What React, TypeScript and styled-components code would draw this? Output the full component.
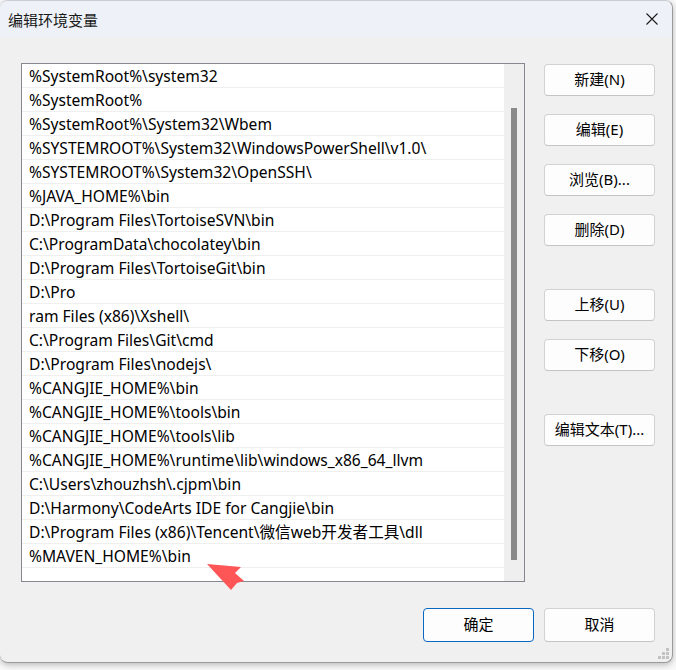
import React from "react";
import styled, { createGlobalStyle } from "styled-components";

const GlobalStyle = createGlobalStyle`
  html, body {
    margin: 0;
    padding: 0;
    background: #e4e4e4;
  }
  body {
    font-family: "Noto Sans", "Noto Sans CJK SC", sans-serif;
  }
`;

const paths = [
  "%SystemRoot%\\system32",
  "%SystemRoot%",
  "%SystemRoot%\\System32\\Wbem",
  "%SYSTEMROOT%\\System32\\WindowsPowerShell\\v1.0\\",
  "%SYSTEMROOT%\\System32\\OpenSSH\\",
  "%JAVA_HOME%\\bin",
  "D:\\Program Files\\TortoiseSVN\\bin",
  "C:\\ProgramData\\chocolatey\\bin",
  "D:\\Program Files\\TortoiseGit\\bin",
  "D:\\Pro",
  "ram Files (x86)\\Xshell\\",
  "C:\\Program Files\\Git\\cmd",
  "D:\\Program Files\\nodejs\\",
  "%CANGJIE_HOME%\\bin",
  "%CANGJIE_HOME%\\tools\\bin",
  "%CANGJIE_HOME%\\tools\\lib",
  "%CANGJIE_HOME%\\runtime\\lib\\windows_x86_64_llvm",
  "C:\\Users\\zhouzhsh\\.cjpm\\bin",
  "D:\\Harmony\\CodeArts IDE for Cangjie\\bin",
  "D:\\Program Files (x86)\\Tencent\\微信web开发者工具\\dll",
  "%MAVEN_HOME%\\bin",
];

// side buttons with the extra gap above each group
const sideButtons: { label: string; gap: number }[] = [
  { label: "新建(N)", gap: 1 },
  { label: "编辑(E)", gap: 18 },
  { label: "浏览(B)...", gap: 18 },
  { label: "删除(D)", gap: 18 },
  { label: "上移(U)", gap: 43 },
  { label: "下移(O)", gap: 18 },
  { label: "编辑文本(T)...", gap: 43 },
];

const App: React.FC = () => {
  return (
    <>
      <GlobalStyle />
      <Screen>
        <Dialog>
          <TitleBar>
            <Title>编辑环境变量</Title>
            <CloseButton aria-label="关闭">
              <svg width="14" height="14" viewBox="0 0 14 14">
                <path d="M1.5 1.5 L12.5 12.5 M12.5 1.5 L1.5 12.5" stroke="#1b1b1b" strokeWidth="1.1" fill="none" />
              </svg>
            </CloseButton>
          </TitleBar>
          <Body>
            <Main>
              <ListBox>
                <Rows>
                  {paths.map((p, i) => (
                    <Row key={i}>{p}</Row>
                  ))}
                </Rows>
                <ScrollTrack>
                  <ScrollThumb />
                </ScrollTrack>
              </ListBox>
              <SideColumn>
                {sideButtons.map((b) => (
                  <SideButton key={b.label} $gap={b.gap}>
                    {b.label}
                  </SideButton>
                ))}
              </SideColumn>
            </Main>
            <Footer>
              <Button $primary>确定</Button>
              <Button>取消</Button>
            </Footer>
          </Body>
          <Grip width="12" height="12" viewBox="0 0 12 12">
            <g fill="#c2c2c2">
              <rect x="8" y="0" width="3" height="3" />
              <rect x="4" y="4" width="3" height="3" />
              <rect x="8" y="4" width="3" height="3" />
              <rect x="0" y="8" width="3" height="3" />
              <rect x="4" y="8" width="3" height="3" />
              <rect x="8" y="8" width="3" height="3" />
            </g>
          </Grip>
          <Arrow width="40" height="30" viewBox="0 0 40 30">
            <path d="M1 1 L35 4 L29 10 L38 18 L31 20 L25 27 Z" fill="#fe5656" />
          </Arrow>
        </Dialog>
      </Screen>
    </>
  );
};

const Screen = styled.div`
  position: relative;
  width: 676px;
  height: 670px;
  overflow: hidden;
  background: #f9f9f9;
`;

const Dialog = styled.div`
  position: relative;
  width: 672px;
  height: 661px;
  display: flex;
  flex-direction: column;
  background: #f0f0f0;
  border: 1px solid #9a9a9a;
  border-top-color: #c9ccd0;
  border-left: none;
  border-radius: 8px;
  box-shadow: 0 2px 6px rgba(0, 0, 0, 0.25);
  overflow: hidden;
  color: #000;
`;

const TitleBar = styled.div`
  height: 36px;
  flex: none;
  display: flex;
  align-items: center;
  justify-content: space-between;
  padding-left: 8px;
  background: #eef2f8;
`;

const Title = styled.div`
  font-size: 15px;
  font-family: "Noto Sans CJK SC", sans-serif;
  color: #1a1a1a;
`;

const CloseButton = styled.div`
  width: 40px;
  height: 36px;
  display: flex;
  align-items: center;
  justify-content: center;
`;

const Body = styled.div`
  flex: 1;
  display: flex;
  flex-direction: column;
  padding: 26px 17px 20px 21px;
`;

const Main = styled.div`
  display: flex;
  align-items: flex-start;
  gap: 19px;
`;

const ListBox = styled.div`
  width: 502px;
  height: 517px;
  display: flex;
  border: 1px solid #858891;
  background: #fff;
`;

const Rows = styled.div`
  flex: 1;
  display: flex;
  flex-direction: column;
`;

const Row = styled.div`
  height: 23px;
  border-bottom: 1px solid #efefef;
  display: flex;
  align-items: center;
  padding-left: 7px;
  font-size: 15.6px;
  white-space: nowrap;
  color: #000;
`;

const ScrollTrack = styled.div`
  width: 20px;
  background: #efefef;
  display: flex;
  justify-content: center;
  padding-top: 44px;
  box-sizing: border-box;
`;

const ScrollThumb = styled.div`
  width: 6px;
  height: 452px;
  background: #8a8a8a;
`;

const SideColumn = styled.div`
  display: flex;
  flex-direction: column;
`;

const Button = styled.div<{ $primary?: boolean }>`
  width: 109px;
  height: 30px;
  box-sizing: content-box;
  display: flex;
  align-items: center;
  justify-content: center;
  padding-bottom: 2px;
  margin-bottom: -2px;
  background: #fdfdfd;
  border: 1px solid ${(p) => (p.$primary ? "#0a67c2" : "#d2d2d2")};
  border-bottom-color: ${(p) => (p.$primary ? "#0a67c2" : "#c4c4c4")};
  border-radius: 4px;
  font-family: "Noto Sans", "Noto Sans CJK SC", sans-serif;
  font-size: 15px;
  line-height: 18px;
  color: #000;
`;

const SideButton = styled(Button)<{ $gap: number }>`
  height: 28px;
  margin-bottom: 0;
  margin-top: ${(p) => p.$gap}px;
`;

const Footer = styled.div`
  display: flex;
  justify-content: flex-end;
  gap: 10px;
  margin-top: 26px;
`;

const Grip = styled.svg`
  position: absolute;
  right: 2px;
  bottom: 2px;
`;

const Arrow = styled.svg`
  position: absolute;
  left: 206px;
  top: 562px;
`;

export default App;
